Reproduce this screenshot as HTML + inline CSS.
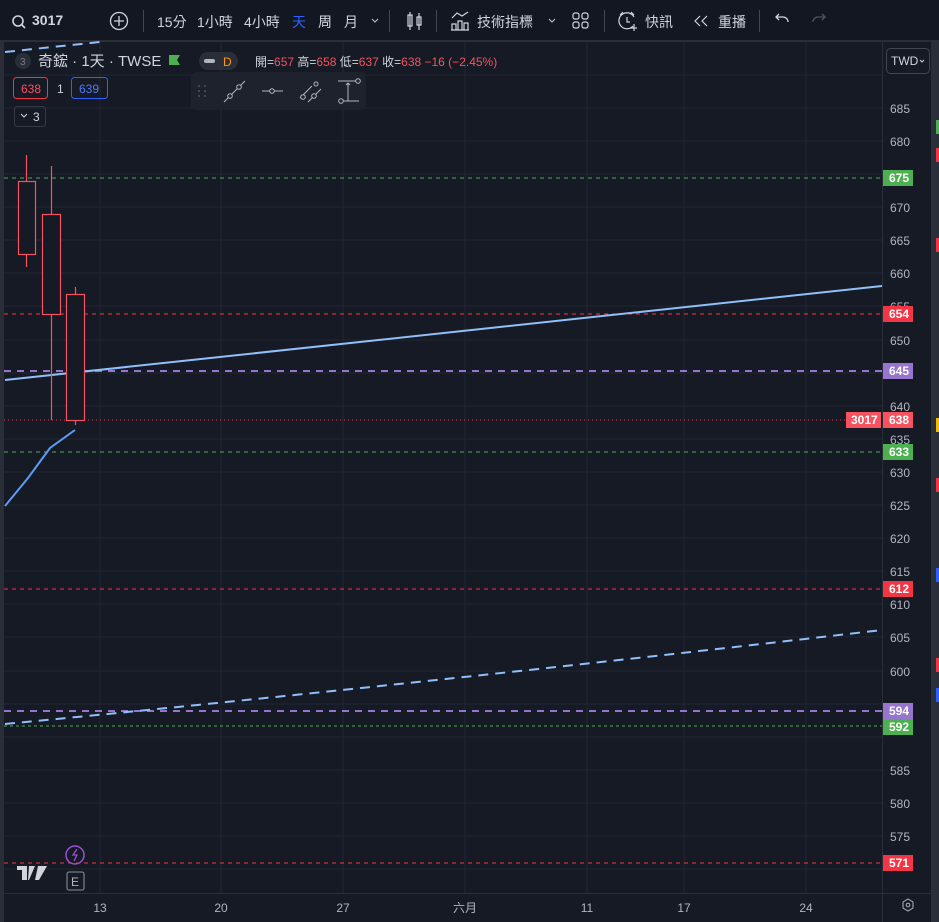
<!DOCTYPE html>
<html><head><meta charset="utf-8"><style>
*{margin:0;padding:0;box-sizing:border-box}
body{width:939px;height:922px;background:#2a2e39;overflow:hidden;font-family:"Liberation Sans","Noto Sans CJK TC",sans-serif;position:relative}
.tb{position:absolute;left:0;top:0;width:939px;height:40px;background:#131722;color:#d1d4dc;font-size:14px}
.tb span{position:absolute;top:12px;white-space:nowrap}
.sep{position:absolute;top:10px;width:1px;height:22px;background:#434651}
svg{position:absolute;left:0;top:0}
.t{font-family:"Liberation Sans","Noto Sans CJK TC",sans-serif}
</style></head><body>
<div class="tb">
<svg width="939" height="40" style="position:absolute">
<circle cx="18" cy="21" r="5" fill="none" stroke="#d1d4dc" stroke-width="1.6"/><line x1="22" y1="25" x2="25" y2="28" stroke="#d1d4dc" stroke-width="1.6"/>
<circle cx="119" cy="21" r="8.5" fill="none" stroke="#d1d4dc" stroke-width="1.3"/><path d="M119 16v10M114 21h10" stroke="#d1d4dc" stroke-width="1.3"/>
<path d="M372 19l3 3 3-3" fill="none" stroke="#b2b5be" stroke-width="1.2"/>
<path d="M410 12v18M410 15h-2v11h4v-11z M419 13v17M417 17h4v8h-4z" fill="none" stroke="#d1d4dc" stroke-width="1.2"/>
<path d="M452 18l5-5 5 3 6-4M452 30v-6h4v6M458 30v-9h4v9M464 30v-7h4v7M451 30h18" fill="none" stroke="#d1d4dc" stroke-width="1.2"/>
<path d="M549 19l3 3 3-3" fill="none" stroke="#b2b5be" stroke-width="1.2"/>
<rect x="573" y="13" width="6" height="6" rx="2" fill="none" stroke="#d1d4dc" stroke-width="1.2"/><rect x="582" y="13" width="6" height="6" rx="2" fill="none" stroke="#d1d4dc" stroke-width="1.2"/><rect x="573" y="22" width="6" height="6" rx="2" fill="none" stroke="#d1d4dc" stroke-width="1.2"/><rect x="582" y="22" width="6" height="6" rx="2" fill="none" stroke="#d1d4dc" stroke-width="1.2"/>
<path d="M633 26a8 8 0 1 1 1-9M627 17v5h3M620 15l3-3M634 15l-3-3M634 24v7M630 28h7" fill="none" stroke="#d1d4dc" stroke-width="1.2"/>
<path d="M700 16l-5 5 5 5M707 16l-5 5 5 5" fill="none" stroke="#d1d4dc" stroke-width="1.2"/>
<path d="M788 22a5 5 0 0 0-5-5h-7M779 14l-3 3 3 3" fill="none" stroke="#d1d4dc" stroke-width="1.3"/>
<path d="M813 22a5 5 0 0 1 5-5h7M822 14l3 3-3 3" fill="none" stroke="#50535e" stroke-width="1.3"/>
</svg>
<span style="left:32px;font-weight:bold">3017</span>
<div class="sep" style="left:143px"></div>
<span style="left:157px">15分</span><span style="left:197px">1小時</span><span style="left:244px">4小時</span>
<span style="left:292px;color:#2962ff">天</span><span style="left:318px">周</span><span style="left:344px">月</span>
<div class="sep" style="left:389px"></div><div class="sep" style="left:436px"></div>
<span style="left:477px">技術指標</span>
<div class="sep" style="left:604px"></div>
<span style="left:645px">快訊</span><span style="left:718px">重播</span>
<div class="sep" style="left:759px"></div>
</div>
<svg width="939" height="922" style="top:0">
<rect x="4" y="42" width="927" height="852" fill="#161a25"/>
<rect x="931" y="42" width="8" height="880" fill="#2a2e39"/>
<rect x="4" y="894" width="927" height="28" fill="#161a25"/>
<g stroke="#232632" stroke-width="1">
<path d="M100 42v852M221 42v852M343 42v852M465 42v852M587 42v852M684 42v852M806 42v852"/>
<path d="M4 75h878M4 108h878M4 141h878M4 174h878M4 207h878M4 240h878M4 273h878M4 306h878M4 340h878M4 373h878M4 406h878M4 439h878M4 472h878M4 505h878M4 538h878M4 571h878M4 604h878M4 637h878M4 671h878M4 704h878M4 737h878M4 770h878M4 803h878M4 836h878M4 869h878"/>
</g>
<line x1="882.5" y1="42" x2="882.5" y2="922" stroke="#2a2e39"/>
<line x1="4" y1="893.5" x2="931" y2="893.5" stroke="#2a2e39"/>
<!-- horizontal levels -->
<line x1="4" y1="178" x2="882" y2="178" stroke="#4caf50" stroke-dasharray="4 4"/>
<line x1="4" y1="314" x2="882" y2="314" stroke="#f23645" stroke-dasharray="4 4"/>
<line x1="4" y1="371" x2="882" y2="371" stroke="#9575cd" stroke-width="2" stroke-dasharray="7 6"/>
<line x1="4" y1="420" x2="882" y2="420" stroke="#f23645" stroke-dasharray="1 3"/>
<line x1="4" y1="452" x2="882" y2="452" stroke="#4caf50" stroke-dasharray="4 4"/>
<line x1="4" y1="589" x2="882" y2="589" stroke="#f23645" stroke-dasharray="4 4"/>
<line x1="4" y1="711" x2="882" y2="711" stroke="#9575cd" stroke-width="2" stroke-dasharray="7 6"/>
<line x1="4" y1="726" x2="882" y2="726" stroke="#4caf50" stroke-dasharray="3 3"/>
<line x1="4" y1="863" x2="882" y2="863" stroke="#f23645" stroke-dasharray="4 4"/>
<!-- blue lines -->
<line x1="5" y1="380" x2="882" y2="286" stroke="#90bff9" stroke-width="2"/>
<path d="M5 506L28 478L50 448L75 430" fill="none" stroke="#5b9cf6" stroke-width="2"/>
<path d="M5 724Q420 684 882 630" fill="none" stroke="#90bff9" stroke-width="2" stroke-dasharray="10 7"/>
<path d="M5 52L100 42" fill="none" stroke="#90bff9" stroke-width="2" stroke-dasharray="10 7"/>
<!-- candles -->
<g stroke="#f7525f" stroke-width="1.2" fill="#161a25">
<path d="M26.5 155v112M51.5 166v254M75.5 287v138"/>
<rect x="18.5" y="181.5" width="17" height="73"/>
<rect x="42.5" y="214.5" width="18" height="100"/>
<rect x="66.5" y="294.5" width="18" height="126"/>
</g>
<!-- axis labels -->
<g class="t" font-size="12" fill="#b2b5be">
<text x="890" y="113">685</text><text x="890" y="146">680</text><text x="890" y="212">670</text><text x="890" y="245">665</text><text x="890" y="278">660</text><text x="890" y="311">655</text><text x="890" y="345">650</text><text x="890" y="411">640</text><text x="890" y="444">635</text><text x="890" y="477">630</text><text x="890" y="510">625</text><text x="890" y="543">620</text><text x="890" y="576">615</text><text x="890" y="609">610</text><text x="890" y="642">605</text><text x="890" y="676">600</text><text x="890" y="775">585</text><text x="890" y="808">580</text><text x="890" y="841">575</text>
</g>
<g class="t" font-size="12" font-weight="bold" fill="#fff">
<rect x="883" y="170" width="30" height="16" fill="#4caf50"/><text x="889" y="182">675</text>
<rect x="883" y="306" width="30" height="16" fill="#f23645"/><text x="889" y="318">654</text>
<rect x="883" y="363" width="30" height="16" fill="#9575cd"/><text x="889" y="375">645</text>
<rect x="846" y="412" width="35" height="16" fill="#f7525f"/><text x="851" y="424">3017</text>
<rect x="883" y="412" width="30" height="16" fill="#f7525f"/><text x="889" y="424">638</text>
<rect x="883" y="444" width="30" height="16" fill="#4caf50"/><text x="889" y="456">633</text>
<rect x="883" y="581" width="30" height="16" fill="#f23645"/><text x="889" y="593">612</text>
<rect x="883" y="703" width="30" height="16" fill="#9575cd"/><text x="889" y="715">594</text>
<rect x="883" y="719" width="30" height="16" fill="#4caf50"/><text x="889" y="731">592</text>
<rect x="883" y="855" width="30" height="16" fill="#f23645"/><text x="889" y="867">571</text>
</g>
<rect x="936" y="120" width="3" height="14" fill="#4caf50"/><rect x="936" y="148" width="3" height="14" fill="#f23645"/><rect x="936" y="238" width="3" height="14" fill="#f23645"/><rect x="936" y="418" width="3" height="14" fill="#f0b90b"/><rect x="936" y="478" width="3" height="14" fill="#f23645"/><rect x="936" y="568" width="3" height="14" fill="#2962ff"/><rect x="936" y="658" width="3" height="14" fill="#f23645"/><rect x="936" y="688" width="3" height="14" fill="#2962ff"/>
<!-- time axis -->
<g class="t" font-size="12" fill="#b2b5be" text-anchor="middle">
<text x="100" y="912">13</text><text x="221" y="912">20</text><text x="343" y="912">27</text><text x="465" y="912">六月</text><text x="587" y="912">11</text><text x="684" y="912">17</text><text x="806" y="912">24</text>
</g>
<path d="M903 902l5-3 5 3v6l-5 3-5-3z" fill="none" stroke="#b2b5be"/><circle cx="908" cy="905" r="1.8" fill="none" stroke="#b2b5be"/>
<!-- TWD -->
<rect x="886.5" y="48.5" width="43" height="25" rx="4" fill="#161a25" stroke="#434651"/>
<text x="891" y="65" class="t" font-size="12" fill="#d1d4dc">TWD</text><path d="M920 60l2 2 2-2" fill="none" stroke="#d1d4dc"/>
<!-- legend -->
<circle cx="23" cy="61" r="8" fill="#2a2e39"/><text x="20" y="65" class="t" font-size="10" fill="#787b86">3</text>
<text x="38" y="66" class="t" font-size="15" fill="#d1d4dc">奇鋐 · 1天 · TWSE</text>
<path d="M169 55h11l-3 5 3 5h-11z" fill="#4caf50"/>
<rect x="199" y="52" width="39" height="18" rx="9" fill="#2a2e39"/><rect x="204" y="59" width="11" height="4" rx="2" fill="#b2b5be"/><text x="223" y="66" class="t" font-size="12" fill="#ff9800">D</text>
<text x="255" y="66" class="t" font-size="12" fill="#d1d4dc">開=<tspan fill="#f7525f">657</tspan> 高=<tspan fill="#f7525f">658</tspan> 低=<tspan fill="#f7525f">637</tspan> 收=<tspan fill="#f7525f">638 −16 (−2.45%)</tspan></text>
<rect x="13.5" y="77.5" width="34" height="21" rx="3" fill="none" stroke="#f23645"/><text x="21" y="93" class="t" font-size="12" fill="#f7525f">638</text>
<text x="57" y="93" class="t" font-size="12" fill="#d1d4dc">1</text>
<rect x="71.5" y="77.5" width="36" height="21" rx="3" fill="none" stroke="#2962ff"/><text x="79" y="93" class="t" font-size="12" fill="#4f7cf7">639</text>
<rect x="14.5" y="106.5" width="31" height="20" rx="3" fill="none" stroke="#363a45"/><path d="M21 114l3 3 3-3" fill="none" stroke="#d1d4dc"/><text x="33" y="121" class="t" font-size="12" fill="#d1d4dc">3</text>
<!-- drawing toolbar -->
<rect x="191" y="72" width="175" height="38" rx="5" fill="#1e222d"/>
<g fill="#50535e"><circle cx="199" cy="86" r="1"/><circle cx="205" cy="86" r="1"/><circle cx="199" cy="91" r="1"/><circle cx="205" cy="91" r="1"/><circle cx="199" cy="96" r="1"/><circle cx="205" cy="96" r="1"/></g>
<g fill="none" stroke="#b2b5be" stroke-width="1">
<path d="M224 102l21-21"/><circle cx="230" cy="96" r="2.3" fill="#1e222d"/><circle cx="239" cy="87" r="2.3" fill="#1e222d"/>
<path d="M262 91h21"/><circle cx="272" cy="91" r="2.3" fill="#1e222d"/>
<path d="M300 98l12-12M308 102l13-13"/><circle cx="303" cy="97" r="2.3" fill="#1e222d"/><circle cx="314" cy="96" r="2.3" fill="#1e222d"/><circle cx="316" cy="84" r="2" fill="#1e222d"/>
<path d="M338 81h19M341 101h18M348 101v-18M346 85l2-2 2 2"/><circle cx="358" cy="81" r="2.3" fill="#1e222d"/><circle cx="341" cy="101" r="2.3" fill="#1e222d"/>
</g>
<!-- bottom-left icons -->
<circle cx="75" cy="855" r="9" fill="none" stroke="#9c4fd1" stroke-width="1.5"/><path d="M77 849l-4 6h4l-3 6" fill="none" stroke="#9c4fd1" stroke-width="1.3"/>
<rect x="67" y="872" width="17" height="18" rx="2" fill="none" stroke="#787b86" stroke-width="1.3"/><text x="71" y="886" class="t" font-size="12" fill="#b2b5be">E</text>
<path d="M17 866h10v14h-5v-10h-5z M29 866h6l-6 14h-1z M38 866h9l-8 14h-4z" fill="#d1d4dc"/>
</svg>
</body></html>
